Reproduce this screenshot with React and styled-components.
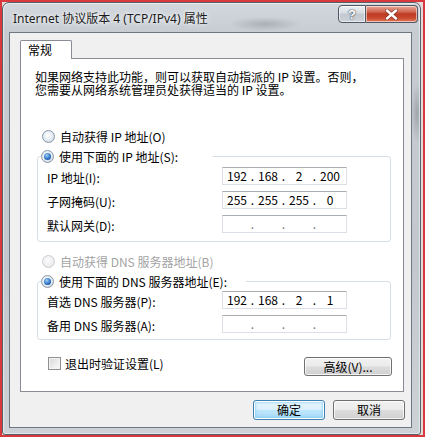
import React from "react";
import styled, { createGlobalStyle, css } from "styled-components";

const FONT = `"Noto Sans CJK SC", "Noto Sans", sans-serif`;

const GlobalStyle = createGlobalStyle`
  html, body { margin: 0; padding: 0; background: #ffffff; }
  body { font-family: ${FONT}; font-size: 12px; color: #000; }
  * { box-sizing: border-box; }
`;

const Screen = styled.div`
  width: 425px;
  height: 437px;
  border: 2px solid #d8393c;
  background: #e4dada;
  overflow: hidden;
  display: flex;
`;

const Window = styled.div`
  width: 419px;
  height: 433px;
  border: 1px solid #56606b;
  border-radius: 7px 7px 3px 3px;
  background:
    radial-gradient(ellipse 36px 7px at 262px 21px, rgba(110, 116, 122, 0.35), transparent),
    radial-gradient(ellipse 6px 30px at 414px 110px, rgba(90, 96, 102, 0.35), transparent),
    linear-gradient(#d3d8dd, #c6ccd2 30px, #c2c8ce 60%, #cdd2d6);
  box-shadow: inset 0 0 0 1px rgba(255, 255, 255, 0.5);
  display: flex;
  flex-direction: column;
  padding: 0 8px 6px 6px;
`;

const TitleBar = styled.div`
  height: 29px;
  margin: 0 -8px 0 -6px;
  padding-left: 10px;
  display: flex;
  align-items: flex-start;
`;

const TitleText = styled.div`
  font-family: "Noto Sans", "Noto Sans CJK SC", sans-serif;
  font-size: 12px;
  line-height: 16px;
  padding-top: 8px;
  color: #1b1b1b;
  text-shadow: 0 0 6px rgba(255, 255, 255, 0.9), 0 0 3px rgba(255, 255, 255, 0.9);
  white-space: nowrap;
`;

const Caption = styled.div`
  margin-left: auto;
  margin-top: 2px;
  margin-right: 2px;
  display: flex;
  height: 18px;
`;

const CapButton = styled.div`
  height: 18px;
  width: ${(p) => p.$w}px;
  display: flex;
  align-items: center;
  justify-content: center;
  border: 1px solid #4f5863;
  box-shadow: inset 0 0 0 1px rgba(255, 255, 255, 0.55);
  ${(p) =>
    p.$close
      ? css`
          border-radius: 0 4px 4px 0;
          border-left: none;
          background: linear-gradient(#e9a898 0%, #d26a55 35%, #bd3a22 50%, #c84a30 75%, #e27a5a 100%);
        `
      : css`
          border-radius: 4px 0 0 4px;
          background: linear-gradient(#eef1f4 0%, #d6dce2 45%, #c1c8d0 50%, #cdd4db 100%);
        `}
`;

const HelpGlyph = styled.span`
  font-family: "Liberation Sans", sans-serif;
  font-weight: bold;
  font-size: 13px;
  line-height: 1;
  color: #ffffff;
  text-shadow: 0 0 2px #39414a, 0 0 1px #39414a;
`;

const Client = styled.div`
  height: 396px;
  border: 1px solid #6f7780;
  background: #f0f0f0;
  padding: 7px 6px 0 10px;
  display: flex;
  flex-direction: column;
`;

const TabRow = styled.div`
  height: 18px;
  display: flex;
  align-items: flex-start;
`;

const Tab = styled.div`
  position: relative;
  z-index: 1;
  width: 52px;
  height: 19px;
  margin-bottom: -1px;
  border: 1px solid #898c95;
  border-bottom: none;
  border-radius: 2px 2px 0 0;
  background: #ffffff;
  padding-left: 7px;
  line-height: 17px;
`;

const Panel = styled.div`
  width: 384px;
  height: 334px;
  border: 1px solid #898c95;
  background: #ffffff;
  display: flex;
  flex-direction: column;
`;

const Para = styled.p`
  margin: 11px 0 0 14px;
  line-height: 13px;
  white-space: nowrap;
`;

const OptionRow = styled.label`
  display: flex;
  align-items: center;
  height: 17px;
  gap: 5px;
  white-space: nowrap;
  color: ${(p) => (p.$disabled ? "#a3a3a3" : "#000")};
  margin-left: ${(p) => p.$ml ?? 21}px;
  margin-top: ${(p) => p.$mt ?? 0}px;
`;

const Legend = styled(OptionRow)`
  width: ${(p) => p.$w}px;
  background: #ffffff;
  margin-left: 3px;
  margin-top: -9px;
`;

const RadioDot = styled.span`
  position: relative;
  flex: none;
  width: 13px;
  height: 13px;
  border-radius: 50%;
  border: 1px solid ${(p) => (p.$disabled ? "#c9cdd2" : "#8a98a8")};
  background: ${(p) =>
    p.$disabled
      ? "radial-gradient(circle at 45% 40%, #fbfbfb 0%, #eeeeee 60%, #dedede 100%)"
      : "radial-gradient(circle at 45% 40%, #ffffff 0%, #e2e9f1 55%, #b9c9da 100%)"};
  ${(p) =>
    p.$checked &&
    css`
      &::after {
        content: "";
        position: absolute;
        left: 2px;
        top: 2px;
        width: 7px;
        height: 7px;
        border-radius: 50%;
        background: radial-gradient(circle at 40% 35%, #9fd0f5 0%, #2f74c5 55%, #153f80 100%);
      }
    `}
`;

const Group = styled.div`
  margin: ${(p) => p.$mt}px 0 0 16px;
  width: 354px;
  border: 1px solid #d5dfe5;
  border-radius: 3px;
  padding-bottom: ${(p) => p.$pb}px;
  display: flex;
  flex-direction: column;
`;

const FieldList = styled.div`
  margin-top: ${(p) => p.$mt}px;
  display: flex;
  flex-direction: column;
  gap: 6px;
`;

const FieldRow = styled.div`
  display: grid;
  grid-template-columns: 175px 125px;
  align-items: center;
  height: 18px;
  padding-left: 9px;
`;

const FieldLabel = styled.span`
  white-space: nowrap;
  position: relative;
  top: 1px;
`;

const IpBox = styled.div`
  height: 18px;
  border: 1px solid #dbdfe6;
  border-top-color: #abadb3;
  background: #ffffff;
  display: grid;
  grid-template-columns: 24px 7px 24px 7px 24px 7px 24px;
  align-items: center;
  padding-left: 2px;
  font-size: 12px;
  line-height: 16px;
`;

const Seg = styled.span`
  text-align: center;
`;

const Dot = styled.span`
  text-align: center;
  color: ${(p) => (p.$empty ? "#777" : "#000")};
`;

const Footer = styled.div`
  margin-top: 16px;
  display: flex;
  align-items: flex-start;
  padding-left: 27px;
`;

const CheckRow = styled.label`
  display: flex;
  align-items: center;
  gap: 4px;
  height: 15px;
  white-space: nowrap;
`;

const CheckBox = styled.span`
  flex: none;
  width: 13px;
  height: 13px;
  border: 1px solid #8f8f8f;
  background: linear-gradient(135deg, #d6d6d6 0%, #eeeeee 60%, #f8f8f8 100%);
  box-shadow: inset 0 0 0 1px #f4f4f4;
`;

const Button = styled.div`
  width: ${(p) => p.$w}px;
  height: ${(p) => p.$h}px;
  display: flex;
  align-items: center;
  justify-content: center;
  border: 1px solid #707070;
  border-radius: 3px;
  background: linear-gradient(#f2f2f2 0%, #ebebeb 48%, #dddddd 52%, #cfcfcf 100%);
  box-shadow: inset 0 0 0 1px rgba(255, 255, 255, 0.75);
  white-space: nowrap;
  line-height: 16px;
  ${(p) =>
    p.$default &&
    css`
      border-color: #3c7fb1;
      background: linear-gradient(#eaf6fd 0%, #d9f0fc 48%, #bee6fd 52%, #a7d9f5 100%);
      box-shadow: inset 0 0 0 1px #ffffff, inset 0 0 2px 2px rgba(120, 200, 240, 0.6);
    `}
`;

const AdvancedButton = styled(Button)`
  margin-left: auto;
  margin-right: 11px;
  margin-top: 1px;
`;

const ButtonRow = styled.div`
  margin-top: 8px;
  display: flex;
  justify-content: flex-end;
  gap: 8px;
`;

function CloseGlyph() {
  return (
    <svg width="13" height="11" viewBox="0 0 13 11">
      <path d="M2 1.5 L11 9.5 M11 1.5 L2 9.5" stroke="#5a2418" strokeWidth="4" strokeLinecap="round" opacity="0.55" />
      <path d="M2 1.5 L11 9.5 M11 1.5 L2 9.5" stroke="#ffffff" strokeWidth="2.4" strokeLinecap="round" />
    </svg>
  );
}

function IpField({ parts }) {
  const empty = !parts;
  const p = parts || ["", "", "", ""];
  return (
    <IpBox>
      <Seg>{p[0]}</Seg>
      <Dot $empty={empty}>.</Dot>
      <Seg>{p[1]}</Seg>
      <Dot $empty={empty}>.</Dot>
      <Seg>{p[2]}</Seg>
      <Dot $empty={empty}>.</Dot>
      <Seg>{p[3]}</Seg>
    </IpBox>
  );
}

function Radio({ checked, disabled, children, ...rest }) {
  return (
    <OptionRow $disabled={disabled} {...rest}>
      <RadioDot $checked={checked} $disabled={disabled} />
      <span>{children}</span>
    </OptionRow>
  );
}

export default function App() {
  return (
    <>
      <GlobalStyle />
      <Screen>
        <Window>
          <TitleBar>
            <TitleText>Internet 协议版本 4 (TCP/IPv4) 属性</TitleText>
            <Caption>
              <CapButton $w={28}>
                <HelpGlyph>?</HelpGlyph>
              </CapButton>
              <CapButton $w={52} $close>
                <CloseGlyph />
              </CapButton>
            </Caption>
          </TitleBar>
          <Client>
            <TabRow>
              <Tab>常规</Tab>
            </TabRow>
            <Panel>
              <Para>
                如果网络支持此功能，则可以获取自动指派的 IP 设置。否则，
                <br />
                您需要从网络系统管理员处获得适当的 IP 设置。
              </Para>
              <Radio $mt={32}>自动获得 IP 地址(O)</Radio>
              <Group $mt={11} $pb={8}>
                <Legend as="label" $w={172}>
                  <RadioDot $checked />
                  <span>使用下面的 IP 地址(S):</span>
                </Legend>
                <FieldList $mt={2}>
                  <FieldRow>
                    <FieldLabel>IP 地址(I):</FieldLabel>
                    <IpField parts={["192", "168", "2", "200"]} />
                  </FieldRow>
                  <FieldRow>
                    <FieldLabel>子网掩码(U):</FieldLabel>
                    <IpField parts={["255", "255", "255", "0"]} />
                  </FieldRow>
                  <FieldRow>
                    <FieldLabel>默认网关(D):</FieldLabel>
                    <IpField />
                  </FieldRow>
                </FieldList>
              </Group>
              <Radio disabled $mt={11}>
                自动获得 DNS 服务器地址(B)
              </Radio>
              <Group $mt={11} $pb={6}>
                <Legend as="label" $w={205}>
                  <RadioDot $checked />
                  <span>使用下面的 DNS 服务器地址(E):</span>
                </Legend>
                <FieldList $mt={1}>
                  <FieldRow>
                    <FieldLabel>首选 DNS 服务器(P):</FieldLabel>
                    <IpField parts={["192", "168", "2", "1"]} />
                  </FieldRow>
                  <FieldRow>
                    <FieldLabel>备用 DNS 服务器(A):</FieldLabel>
                    <IpField />
                  </FieldRow>
                </FieldList>
              </Group>
              <Footer>
                <CheckRow>
                  <CheckBox />
                  <span>退出时验证设置(L)</span>
                </CheckRow>
                <AdvancedButton $w={88} $h={19}>
                  高级(V)...
                </AdvancedButton>
              </Footer>
            </Panel>
            <ButtonRow>
              <Button $w={72} $h={20} $default>
                确定
              </Button>
              <Button $w={72} $h={20}>
                取消
              </Button>
            </ButtonRow>
          </Client>
        </Window>
      </Screen>
    </>
  );
}
